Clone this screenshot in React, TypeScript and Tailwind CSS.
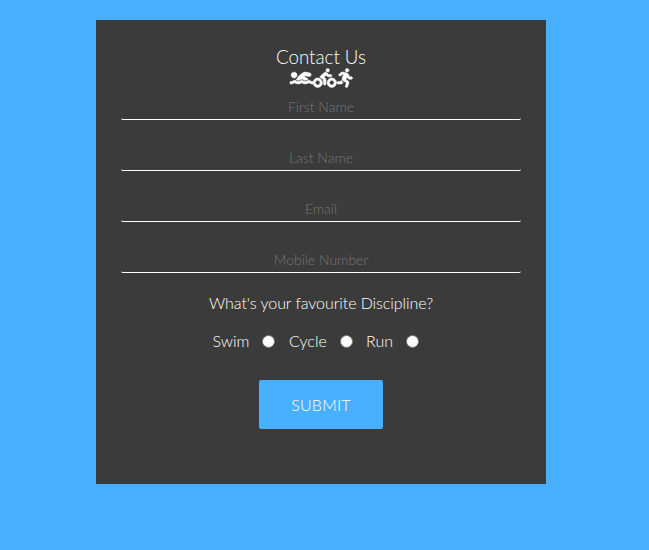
import React from "react";
import { FaBiking, FaRunning, FaSwimmer } from "react-icons/fa";

const fields = ["First Name", "Last Name", "Email", "Mobile Number"];

function Field({ label }: { label: string }) {
  return (
    <input
      type="text"
      placeholder={label}
      className="mb-[25px] block h-[26px] w-full rounded-[2px] border-b border-white bg-transparent text-center text-[14px] font-light text-white outline-none placeholder:text-[#757575]"
    />
  );
}

function Discipline({ label, className }: { label: string; className: string }) {
  return (
    <label className={`flex items-center justify-between ${className}`}>
      {label}
      <input
        type="radio"
        name="discipline"
        className="size-[13px] appearance-none rounded-full border border-[#767676] bg-white"
      />
    </label>
  );
}

export default function App() {
  return (
    <div className="h-[550px] w-[649px] bg-[#48b0ff] pt-5 font-['Lato',sans-serif] font-light text-white">
      <form className="ml-24 h-[464px] w-[450px] bg-[#3b3b3b] px-[25px] pt-[25px]">
        <h1 className="pt-px text-center text-[18.72px] leading-[22px]">Contact Us</h1>
        <div className="mb-[6px] flex h-5 justify-center">
          <FaSwimmer className="h-5 w-[23.5px] overflow-visible stroke-white stroke-[16]" />
          <FaBiking className="h-5 w-[23.5px] overflow-visible stroke-white stroke-[16]" />
          <FaRunning className="h-5 w-[15.5px] overflow-visible stroke-white stroke-[16]" />
        </div>
        {fields.map((label) => (
          <Field key={label} label={label} />
        ))}
        <p className="-mt-[5px] text-center text-[16px] leading-5 tracking-[-0.06px]">What's your favourite Discipline?</p>
        <div className="mt-[18px] flex h-5 pl-[91.5px] text-[16px] leading-5">
          <Discipline label="Swim" className="w-[62.5px]" />
          <Discipline label="Cycle" className="ml-[14px] w-[64px]" />
          <Discipline label="Run" className="ml-[13px] w-[53px]" />
        </div>
        <button
          type="submit"
          className="mx-auto mt-[29px] block h-[49px] w-[124px] rounded-[2px] bg-[#48b0ff] text-[16px] tracking-[0.2px]"
        >
          SUBMIT
        </button>
      </form>
    </div>
  );
}
